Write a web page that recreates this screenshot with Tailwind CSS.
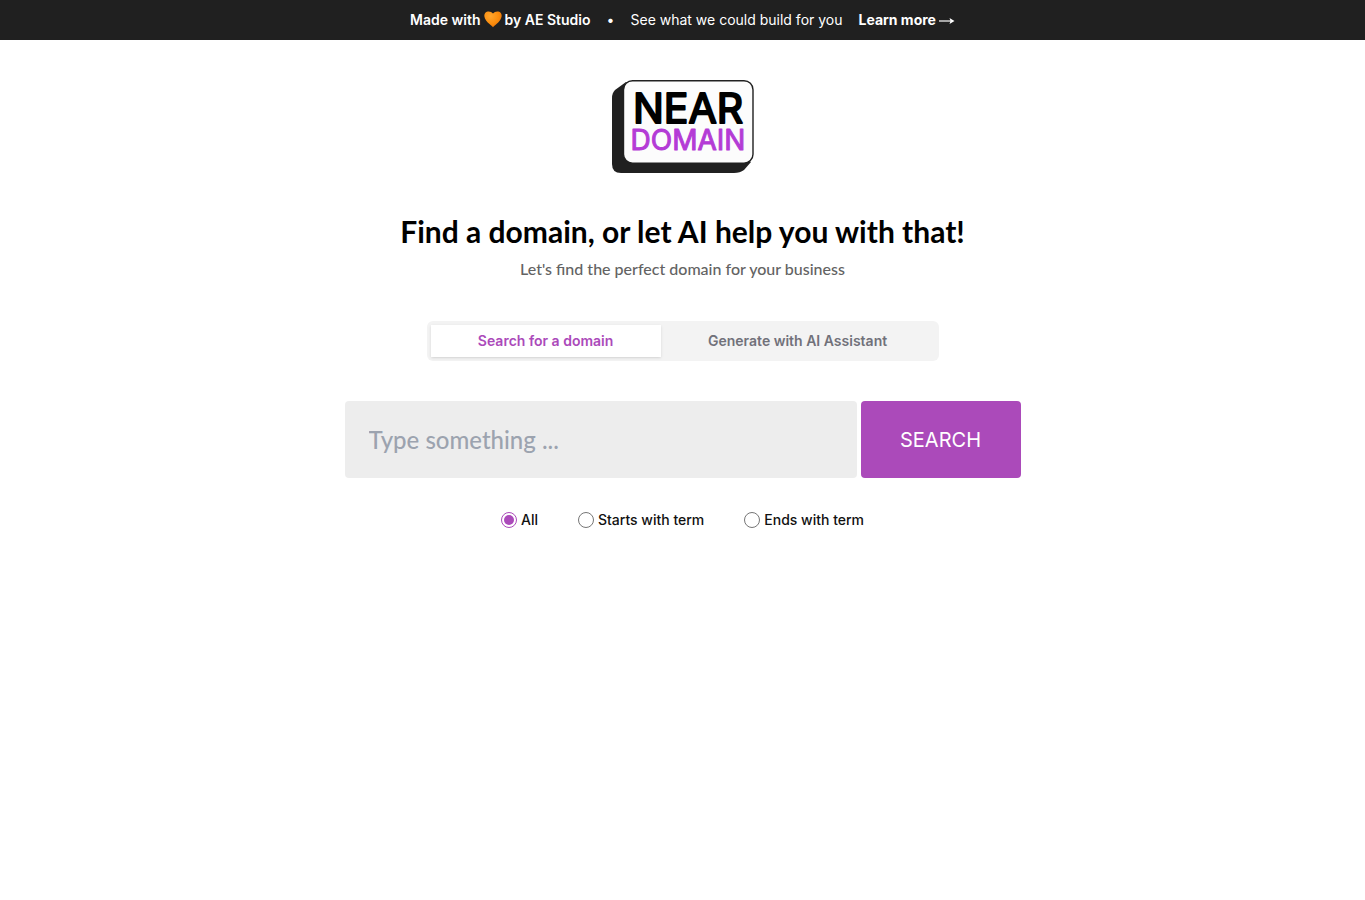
<!DOCTYPE html>
<html lang="en">
<head>
    <meta charset="UTF-8">
    <meta name="viewport" content="width=device-width, initial-scale=1.0">
    <title>Near Domain</title>
    <script src="https://cdn.jsdelivr.net/npm/@tailwindcss/browser@4"></script>
</head>
<body class="bg-white min-h-screen font-['Inter',sans-serif] text-black">
    <!-- Top banner -->
    <div class="flex h-10 items-center justify-center bg-[#202020] text-sm text-white">
        <p class="flex items-center gap-[3px] font-semibold">
            <span>Made with</span>
            <svg class="h-[18px] w-[18px]" viewBox="0 0 18 18" role="img" aria-label="love">
                <defs>
                    <radialGradient id="heart" cx="0.35" cy="0.3" r="0.8">
                        <stop offset="0" stop-color="#ffa62e"></stop>
                        <stop offset="0.6" stop-color="#fb8c0c"></stop>
                        <stop offset="1" stop-color="#e5700a"></stop>
                    </radialGradient>
                </defs>
                <path fill="url(#heart)" d="M9 2.600C7.800.8 5.600.2 3.700.5 1.500.9.2 2.800.3 5c.2 3.300 2.900 6 5.200 8.100C7 14.500 8.200 15.300 9 16.200c.8-.9 2-1.700 3.500-3.100 2.300-2.100 5-4.800 5.200-8.100.1-2.200-1.200-4.100-3.400-4.500C12.400.2 10.200.8 9 2.600z"></path>
            </svg>
            <span>by AE Studio</span>
        </p>
        <span class="mx-4 w-2 text-center">•</span>
        <p>See what we could build for you</p>
        <a href="#" class="ml-4 flex items-center gap-[3px] font-bold">
            Learn more
            <svg class="mt-[2px] h-2 w-4" viewBox="0 0 16 8" aria-hidden="true">
                <path d="M0 4h12" fill="none" stroke="currentColor" stroke-width="1.200"></path>
                <path d="M10.500 1 15.500 4l-5 3 1-3z" fill="currentColor"></path>
            </svg>
        </a>
    </div>

    <main class="mx-auto flex max-w-[676px] flex-col items-center pt-10">
        <a href="#" aria-label="Near Domain">
            <svg class="h-[94px] w-[142px]" viewBox="0 0 142 94" font-family="Inter, sans-serif" font-weight="400" text-anchor="middle" stroke-linejoin="round">
                <path fill="#202020" d="M14 2 3 10Q0 13 0 18V84Q0 93 9 93H122Q128 93 132 90L139 82z"></path>
                <rect x="11.500" y="0.700" width="129.500" height="82.500" rx="9" fill="#fcfcfc" stroke="#202020" stroke-width="1.400"></rect>
                <text x="76" y="43" font-size="41" fill="#000" stroke="#000" stroke-width="2">NEAR</text>
                <text x="76" y="70" font-size="28" fill="#b43bd6" stroke="#b43bd6" stroke-width="1">DOMAIN</text>
            </svg>
        </a>

        <h1 class="mt-10 text-center font-['Lato',sans-serif] text-[30px] leading-[34px] font-bold">Find a domain, or let AI help you with that!</h1>
        <p class="mt-[9px] text-center font-['Lato',sans-serif] text-base font-medium text-[#636363]">Let's find the perfect domain for your business</p>

        <div class="mt-10 flex w-full max-w-lg rounded-md bg-[#f3f3f3] p-1 text-sm font-semibold" role="tablist">
            <button type="button" role="tab" aria-selected="true" class="h-8 flex-auto bg-white px-11 text-[#ab4aba] shadow-sm">Search for a domain</button>
            <button type="button" role="tab" aria-selected="false" class="h-8 flex-auto px-11 text-[#71717a]">Generate with AI Assistant</button>
        </div>

        <form class="mt-10 w-full">
            <div class="flex gap-1">
                <input type="text" aria-label="Domain search" placeholder="Type something ..." class="h-[77px] min-w-0 flex-1 rounded bg-[#ededed] px-6 font-['Lato',sans-serif] text-2xl font-medium placeholder:text-[#9ca3af]">
                <button type="submit" class="h-[77px] w-40 rounded bg-[#ab4aba] text-xl text-white">SEARCH</button>
            </div>

            <div class="mt-8 flex justify-center gap-10 text-sm font-medium text-[#111]">
                <label class="flex items-center gap-1">
                    <input type="radio" name="position" value="all" checked class="size-4 appearance-none rounded-full border border-[#767676] p-[2px] before:block before:size-full before:rounded-full checked:border-[#ab4aba] checked:before:bg-[#ab4aba]">
                    All
                </label>
                <label class="flex items-center gap-1">
                    <input type="radio" name="position" value="starts" class="size-4 appearance-none rounded-full border border-[#767676] p-[2px] before:block before:size-full before:rounded-full checked:border-[#ab4aba] checked:before:bg-[#ab4aba]">
                    Starts with term
                </label>
                <label class="flex items-center gap-1">
                    <input type="radio" name="position" value="ends" class="size-4 appearance-none rounded-full border border-[#767676] p-[2px] before:block before:size-full before:rounded-full checked:border-[#ab4aba] checked:before:bg-[#ab4aba]">
                    Ends with term
                </label>
            </div>
        </form>
    </main>
</body>
</html>
